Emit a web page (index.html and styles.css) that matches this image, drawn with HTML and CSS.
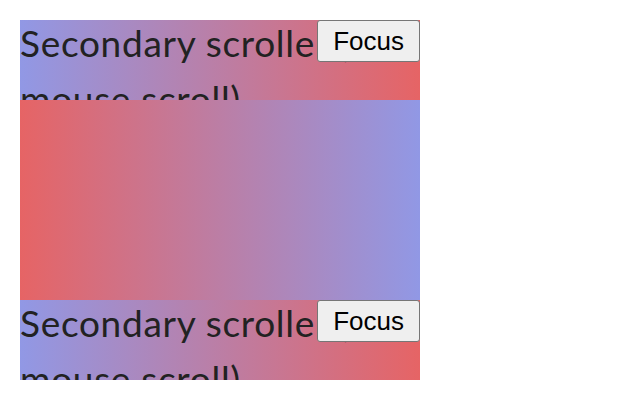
FILE: index.html
```html
<!DOCTYPE html>
<html>
<head>
<meta charset="utf-8">
<link rel="stylesheet" href="styles.css">
</head>
<body>
<div class="stack">
  <div class="scroller forward">
    <p class="label">Secondary scroller (<br>mouse scroll)</p>
    <button class="focus">Focus</button>
  </div>
  <div class="spacer"></div>
  <div class="scroller forward">
    <p class="label">Secondary scroller (<br>mouse scroll)</p>
    <button class="focus">Focus</button>
  </div>
</div>
</body>
</html>
```

FILE: styles.css
```css
html, body {
  margin: 0;
  padding: 0;
  background: #ffffff;
}
body {
  padding: 20px;
}
.stack {
  display: flex;
  flex-direction: column;
  width: 400px;
}
.scroller {
  position: relative;
  height: 80px;
  overflow: hidden;
}
.forward {
  background: linear-gradient(to right, #9198e5, #e66465);
}
.spacer {
  height: 200px;
  background: linear-gradient(to right, #e66465, #9198e5);
}
.label {
  margin: -5px 0 0 0;
  font-family: Lato, "Liberation Sans", sans-serif;
  font-size: 37px;
  line-height: 56px;
  letter-spacing: 0.7px;
  color: #222222;
}
.focus {
  position: absolute;
  top: 0;
  right: 0;
  margin: 0;
  font-family: "Liberation Sans", Arial, sans-serif;
  font-size: 26px;
  line-height: 30px;
  padding: 5px 15px;
  border: 1px solid #767676;
  border-radius: 3px;
  background: #efefef;
  color: #000000;
}
```
